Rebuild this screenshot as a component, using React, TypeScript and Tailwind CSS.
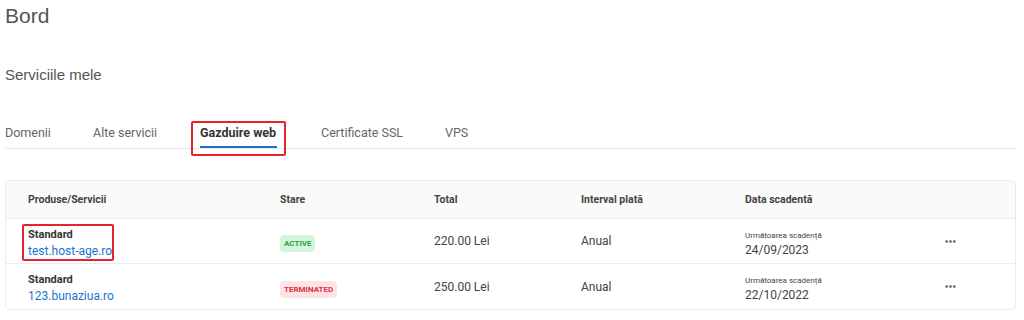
import { MoreHorizontal } from "lucide-react";

const tabs = ["Domenii", "Alte servicii", "Gazduire web", "Certificate SSL", "VPS"];

const rows = [
  {
    name: "Standard",
    domain: "test.host-age.ro",
    status: "ACTIVE",
    total: "220.00 Lei",
    interval: "Anual",
    due: "24/09/2023",
    highlight: true,
  },
  {
    name: "Standard",
    domain: "123.bunaziua.ro",
    status: "TERMINATED",
    total: "250.00 Lei",
    interval: "Anual",
    due: "22/10/2022",
    highlight: false,
  },
];

const cols = "grid grid-cols-[252px_154px_147px_164px_199px_1fr] pl-[22px]";

const App = () => {
  return (
    <div className="w-[1024px] h-[320px] bg-white pl-[5px] pr-[8px] pt-[4px] font-['Roboto',sans-serif] text-[#444]">
      <h1 className="text-[21px] leading-[24px] text-[#555] font-['Liberation_Sans',sans-serif]">
        Bord
      </h1>
      <h2 className="mt-[38px] text-[15px] leading-[18px] text-[#555] font-['Liberation_Sans',sans-serif]">
        Serviciile mele
      </h2>

      <div className="mt-[32px] flex border-b border-[#e6e6e6] h-[33px] items-stretch">
        {tabs.map((tab, i) => {
          const active = i === 2;
          const spacing = ["w-[88px]", "w-[107px]", "w-[121px]", "w-[124px]", "w-[40px]"][i];
          return (
            <div key={tab} className={`${spacing} relative`}>
              {active && (
                <div className="absolute left-[-9px] top-[5px] w-[95px] h-[35px] border-2 border-[#e8222a] rounded-[2px]" />
              )}
              <div
                className={`pt-[9px] text-[12.5px] leading-[16px] inline-block h-full ${
                  active
                    ? "font-bold text-[#333] border-b-2 border-[#1f6fc3] pr-[1px]"
                    : "text-[#666]"
                }`}
              >
                {tab}
              </div>
            </div>
          );
        })}
      </div>

      <div className="mt-[31px] border border-[#ebebeb] rounded-[5px] overflow-hidden">
        <div className={`${cols} h-[38px] items-center bg-[#fafafa] border-b border-[#ececec] text-[10.5px] font-bold text-[#444]`}>
          <div>Produse/Servicii</div>
          <div>Stare</div>
          <div>Total</div>
          <div>Interval plată</div>
          <div>Data scadentă</div>
          <div />
        </div>
        {rows.map((row, i) => (
          <div
            key={row.domain}
            className={`${cols} h-[45px] items-center ${i === 0 ? "border-b border-[#ececec]" : ""}`}
          >
            <div className="relative pt-[4px]">
              {row.highlight && (
                <div className="absolute left-[-6px] top-[0px] w-[92px] h-[37px] border-2 border-[#e8222a] rounded-[2px]" />
              )}
              <div className="text-[11px] leading-[14px] font-bold text-[#333]">{row.name}</div>
              <div className="mt-[2px] text-[12px] leading-[15px] text-[#1a73cc]">{row.domain}</div>
            </div>
            <div>
              <span
                className={`inline-block rounded-[4px] px-[4px] py-[4px] text-[8px] leading-[9px] font-bold ${
                  row.status === "ACTIVE"
                    ? "bg-[#d3f5da] text-[#2ea44b]"
                    : "bg-[#fde3e5] text-[#e0323f]"
                }`}
              >
                {row.status}
              </span>
            </div>
            <div className="text-[12px]">{row.total}</div>
            <div className="text-[12px]">{row.interval}</div>
            <div className="pt-[6px]">
              <div className="text-[8px] leading-[10px] text-[#444]">Următoarea scadență</div>
              <div className="mt-[2px] text-[12px] leading-[15px]">{row.due}</div>
            </div>
            <div>
              <MoreHorizontal className="w-[13px] h-[13px] text-[#555]" strokeWidth={3} />
            </div>
          </div>
        ))}
      </div>
    </div>
  );
};

export default App;
